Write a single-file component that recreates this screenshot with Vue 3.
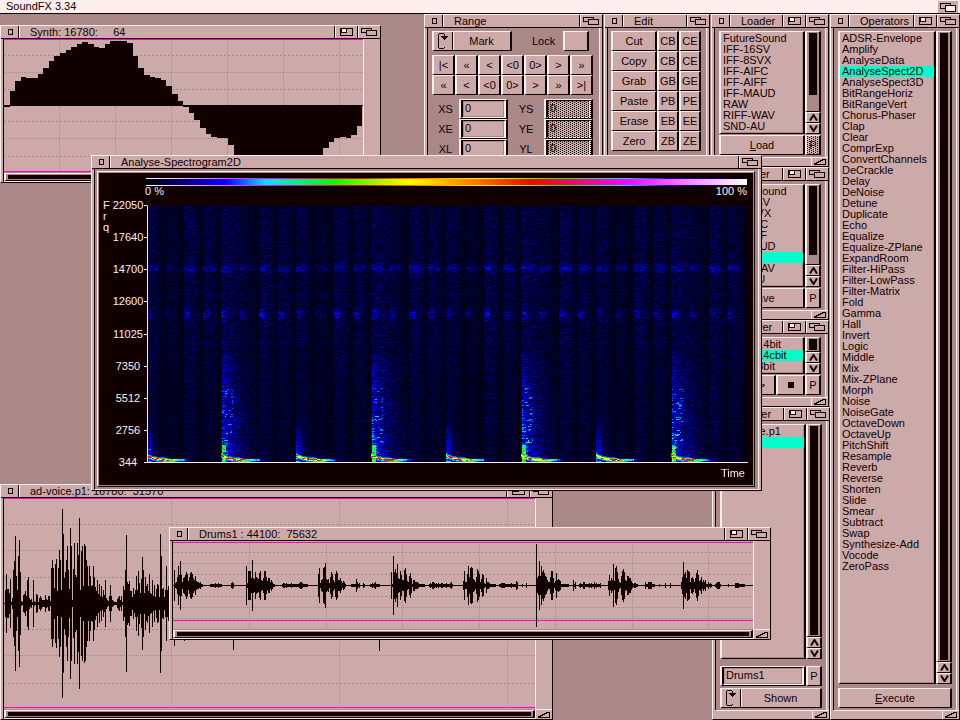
<script setup>
import { reactive } from 'vue'

const formats = ['FutureSound', 'IFF-16SV', 'IFF-8SVX', 'IFF-AIFC', 'IFF-AIFF', 'IFF-MAUD', 'RAW', 'RIFF-WAV', 'SND-AU']
const operators = [
  'ADSR-Envelope', 'Amplify', 'AnalyseData', 'AnalyseSpect2D', 'AnalyseSpect3D', 'BitRangeHoriz', 'BitRangeVert',
  'Chorus-Phaser', 'Clap', 'Clear', 'ComprExp', 'ConvertChannels', 'DeCrackle', 'Delay', 'DeNoise', 'Detune',
  'Duplicate', 'Echo', 'Equalize', 'Equalize-ZPlane', 'ExpandRoom', 'Filter-HiPass', 'Filter-LowPass',
  'Filter-Matrix', 'Fold', 'Gamma', 'Hall', 'Invert', 'Logic', 'Middle', 'Mix', 'Mix-ZPlane', 'Morph', 'Noise',
  'NoiseGate', 'OctaveDown', 'OctaveUp', 'PitchShift', 'Resample', 'Reverb', 'Reverse', 'Shorten', 'Slide',
  'Smear', 'Subtract', 'Swap', 'Synthesize-Add', 'Vocode', 'ZeroPass'
]
const moves = ['|<', '«', '<', '<0', '0>', '>', '»', '«', '<', '<0', '0>', '>', '»', '>|']
const ranges = [
  { id: 'XS' }, { id: 'YS', off: true },
  { id: 'XE' }, { id: 'YE', off: true },
  { id: 'XL' }, { id: 'YL', off: true }
]
const edits = [
  ['Cut', 'CB', 'CE'], ['Copy', 'CB', 'CE'], ['Grab', 'GB', 'GE'],
  ['Paste', 'PB', 'PE'], ['Erase', 'EB', 'EE'], ['Zero', 'ZB', 'ZE']
]
const frequencies = [22050, 17640, 14700, 12600, 11025, 7350, 5512, 2756, 344]

/* Synth: 64 samples, distance of each from the zero line in thirds of a pixel */
const synthHalf = [
  -3, 46, 76, 88, 85, 85, 97, 115, 136, 151, 160, 169, 178, 187, 193, 187, 178, 175, 187, 196, 196, 196, 190,
  151, 115, 94, 88, 85, 79, 61, 37, 16
]
const synth = [...synthHalf, ...[-4, -20, -41, -65, -83, -92, -95, -95, -116], ...Array(15).fill(-170),
  -146, -125, -107, -95, -92, -95, -86, -59]
const synthPath = (() => {
  let d = ''
  synth.forEach((v, i) => {
    const x0 = Math.round(i * 5.6)
    const x1 = Math.round((i + 1) * 5.6)
    const h = Math.round(v / 3)
    const top = h > 0 ? 67 - h : 66
    const height = Math.max(1, Math.abs(h) + (h > 0 ? 0 : 1))
    d += `M${x0} ${top}H${x1}V${top + height}H${x0}Z`
  })
  return d
})()

/* Column amplitudes in thirds of a pixel: [first column, amplitudes...] */
const voice = [
  [1, 38, 86, 42, 42, 30, 72, 3, 14, 100, 127, 200, 80, 40, 142, 188, 93, 5, 3, 25, 28, 35, 20, 68, 79, 14, 10, 12,
    3, 70, 5, 3, 28, 24, 4, 14, 22, 16, 10, 8, 10, 25, 12, 8, 22, 20, 6, 104, 128, 104, 45, 118, 133, 36, 106,
    158, 130, 40, 282, 208, 75, 92, 128, 172, 100, 42, 226, 170, 10, 103, 181, 85, 78, 181, 145, 256, 40, 155,
    170, 50, 176, 170, 128, 110, 50, 110, 80, 50, 55, 110, 78, 48, 35, 70, 28, 58, 22, 50, 18, 38, 24, 70, 15, 10,
    5, 22, 55, 22, 8, 7, 2, 2, 2, 12, 18, 22, 10, 22, 4, 52, 40, 98, 203, 64, 58, 67, 36, 35, 18, 44, 28, 40, 82,
    38, 97, 60, 30, 72, 139, 98, 30, 78, 50, 56, 35, 86, 30, 26, 70, 22, 55, 18, 42, 56, 55, 18, 206, 140, 42, 44,
    18, 40, 110, 38, 50, 30, 60, 40, 80, 50, 126, 60, 30, 20, 50, 40, 60, 30, 20, 40, 111],
  [229, 138], [375, 141]
]
const drums = [
  [1, 46, 5, 10, 25, 56, 30, 73, 30, 10, 20, 25, 30, 38, 32, 12, 24, 36, 40, 32, 20, 14, 26, 12, 10, 8, 6, 8, 4, 4],
  [37, 4, 2, 4, 3, 4, 5, 3, 4, 5, 4, 3, 4], [58, 5, 8, 5],
  [73, 58, 5, 43, 42, 43, 20, 76, 22, 18, 40, 24, 20, 18, 35, 43, 14, 12, 20, 42, 41, 24, 12, 20, 22, 10, 14, 10, 4, 3],
  [109, 3, 6, 6, 4, 5, 2, 2, 3, 2, 5, 4, 3, 2, 4, 2, 2, 4, 6, 10, 8, 6, 3, 2, 2, 4, 3],
  [145, 32, 52, 5, 15, 17, 50, 55, 67, 18, 15, 18, 5, 25, 40, 34, 14, 10, 34, 43, 36, 14, 14, 22, 12, 6, 12, 10, 3],
  [178, 4, 2, 2, 4, 2, 18, 10, 4, 7], [190, 5, 4], [197, 4, 3, 6, 4, 6, 8, 3, 4, 3, 4],
  [218, 40, 2, 88, 40, 48, 35, 64, 20, 18, 42, 30, 14, 16, 46, 50, 32, 12, 8, 28, 36, 22, 4, 14, 16, 8, 10, 8, 6, 3, 4, 2, 4, 2, 4],
  [256, 4, 5, 4, 8, 8, 5, 4, 5, 4, 6, 3, 2, 5, 5, 4, 2, 2, 6, 4, 2, 3, 6, 8, 4],
  [290, 12, 43, 10, 10, 32, 58, 25, 50, 54, 52, 18, 14, 10, 25, 48, 42, 34, 8, 18, 34, 30, 6, 3, 20, 8, 8, 6, 3, 4, 4, 2, 3, 4],
  [326, 3, 4, 7, 7, 6, 7, 4, 3, 3, 2, 2, 2, 5, 4, 2, 2, 4, 11, 10], [349, 3], [353, 7],
  [363, 124, 22, 26, 73, 28, 58, 38, 46, 36, 26, 24, 16, 8, 10, 25, 43, 42, 22, 5, 12, 37, 14, 18, 14, 12, 3, 4, 4, 2, 2, 4, 3, 4],
  [400, 16, 3, 9], [406, 4, 5, 2, 2, 8, 8, 2, 2, 4, 3, 7, 3, 5, 2, 3, 8, 4, 6, 3, 2, 4, 5],
  [435, 12, 31, 12, 22, 14, 64, 12, 50, 58, 40, 18, 10, 5, 26, 42, 48, 38, 14, 12, 26, 28, 20, 20, 12, 6, 4, 7, 7, 4, 3],
  [472, 10, 3, 3, 9, 10, 8, 9, 4, 3, 3], [486, 4], [492, 5], [497, 7],
  [508, 8, 24, 70, 32, 38, 20, 46, 43, 40, 8, 20, 24, 18, 8, 22, 36, 44, 30, 12, 16, 24, 10, 14, 10, 14, 3, 3, 10, 2, 5, 3],
  [542, 4, 5, 10, 9, 8, 4], [555, 4], [562, 6, 7, 7, 6, 3, 4, 3, 4, 3, 3]
]
function columns(runs, centre) {
  let d = ''
  for (const [start, ...values] of runs) {
    values.forEach((v, i) => {
      const h = Math.round(v / 3)
      d += `M${start + i} ${centre - h}h1v${2 * h + 1}h-1z`
    })
  }
  return d
}

const windows = reactive([
  {
    kind: 'wave', title: 'Synth: 16780:     64', zoom: true, x: 0, y: 25, w: 381, h: 158,
    vw: 359, vh: 133, path: synthPath, centre: 66, limits: [0, 132],
    dashed: [16, 50, 82, 117], dotted: [33, 99], verticals: [55, 111, 167, 223, 279, 335]
  },
  {
    kind: 'wave', title: 'ad-voice.p1: 16780:  31570', zoom: true, x: 0, y: 484, w: 553, h: 236,
    vw: 531, vh: 211, path: columns(voice, 105), centre: 105, limits: [0, 209],
    dashed: [26, 79, 131, 185], dotted: [52, 157], verticals: [167, 335, 503]
  },
  { kind: 'range', title: 'Range', x: 424, y: 14, w: 179, h: 150 },
  { kind: 'edit', title: 'Edit', x: 604, y: 14, w: 106, h: 150 },
  { kind: 'files', title: 'Loader', zoom: true, size: true, x: 711, y: 14, w: 118, h: 153, items: formats, picked: -1, knob: 80, action: 'Load', key: true, off: true },
  { kind: 'files', title: 'Saver', zoom: true, size: true, x: 711, y: 167, w: 118, h: 153, items: formats, picked: 6, knob: 90, action: 'Save', key: true },
  { kind: 'player', title: 'Player', zoom: true, size: true, x: 711, y: 320, w: 118, h: 87, items: ['Amiga 14bit', 'Amiga 14cbit', 'Amiga 8bit'], picked: 1, knob: 100 },
  { kind: 'buffers', title: 'Buffer', zoom: true, size: true, x: 712, y: 407, w: 118, h: 313, items: ['ad-voice.p1', 'Drums1', 'Synth'], picked: 1, knob: 100 },
  { kind: 'operators', title: 'Operators', zoom: true, size: true, x: 830, y: 14, w: 130, h: 706, items: operators, picked: 3, knob: 100, action: 'Execute' },
  { kind: 'spectrum', title: 'Analyse-Spectrogram2D', x: 91, y: 155, w: 671, h: 336 },
  {
    kind: 'wave', title: 'Drums1 : 44100:  75632', zoom: true, x: 169, y: 527, w: 602, h: 113,
    vw: 580, vh: 88, path: columns(drums, 44), centre: 44, limits: [1, 79],
    dashed: [11, 33, 55, 77], dotted: [22, 66], verticals: [76, 153, 229, 306, 382, 459, 535]
  }
])
const px = (w) => ({ left: w.x + 'px', top: w.y + 'px', width: w.w + 'px', height: w.h + 'px' })
const hasList = (w) => Boolean(w.items)

/* Level colours: black, blue, cyan, green, yellow, red, magenta, white */
const stops = [[0, 0, 0, 0], [0.13, 0, 0, 255], [0.2, 0, 230, 240], [0.31, 0, 255, 0], [0.44, 255, 255, 0],
  [0.64, 255, 0, 0], [0.8, 255, 0, 255], [1, 255, 255, 255]]
function levelColour(v) {
  const t = Math.min(1, Math.max(0, v))
  let i = 1
  while (t > stops[i][0]) i++
  const a = stops[i - 1]
  const b = stops[i]
  const f = (t - a[0]) / (b[0] - a[0])
  return [1, 2, 3].map((c) => a[c] + (b[c] - a[c]) * f)
}
function paintSpectrum(canvas) {
  if (!canvas) return
  const W = 600
  const H = 256
  const ctx = canvas.getContext('2d')
  const img = ctx.createImageData(W, H)
  let seed = 77
  const rnd = () => {
    seed = (seed * 1664525 + 1013904223) >>> 0
    return seed / 4294967296
  }
  const stepLevel = [0.85, 0.55, 1, 0.85]
  for (let y = 0; y < H; y++) {
    let n = rnd()
    let run = 0
    const up = H - 1 - y
    for (let x = 0; x < W; x++) {
      if (run-- <= 0) {
        n = rnd()
        run = Math.floor(rnd() * 4)
      }
      const beat = Math.min(7, Math.floor((x + 2) / 75))
      const bx = x + 2 - beat * 75
      const snare = beat % 2 === 1
      const step = Math.min(3, Math.floor(bx / 18.75))
      const sx = bx - step * 18.75
      let env = stepLevel[step] * Math.max(0, 1 - Math.pow(Math.abs(sx - 5) / 14, 2))
      if (snare && bx < 37) env = Math.max(env, 1.15 - bx / 45)
      const high = snare && bx < 37 ? 1 : Math.min(1, 0.6 + up / 330)
      let v = 0.006 + (0.08 + env) * (0.013 + 0.038 * n * n) * high
      const b1 = Math.exp(-Math.pow((y - 62) / 3.5, 2)) * (sx < 12 ? 1 : 0.25)
      const b2 = Math.exp(-Math.pow((y - 108) / 5, 2)) * (sx > 0 && sx < 6 ? 1 : 0.1)
      v += (b1 * 0.065 + b2 * 0.07) * (0.1 + env) * (0.15 + n)
      if (y === 88 || y === 136) v += 0.014
      if (y === 215) v += 0.02 * env
      if (snare) {
        const fade = 1 - up / 110
        if (bx > 0 && fade > 0) v += Math.exp(-bx / 11) * Math.sqrt(fade) * (0.045 + 0.12 * n)
        if (bx > 3 && bx < 12 && up > 18 && up < 74 && n > 0.86) v += 0.06
        if (bx > 0 && bx < 5 && up < 17) v += 0.06 + 0.12 * n
      } else if (bx < 5 && up < 42) {
        v += (1 - up / 42) * (0.08 + (y % 3 === 0 ? 0.1 : 0) * n)
      }
      if (up < 70) v += 0.04 * Math.exp(-up / 18) * Math.exp(-bx / 18) * (bx % 5 < 2 ? 1.5 : 0.8)
      const curve = 1 + 5 * Math.exp(-bx / 8)
      const dist = Math.abs(up - curve)
      const tail = bx < 20 ? 1 : Math.max(0, 1 - (bx - 20) / 24)
      if (dist < 2.5) {
        const hot = dist < 1 ? (n > 0.5 ? 0.68 : 0.44) : dist < 1.6 ? 0.28 : 0.16
        v = Math.max(v, hot * tail)
      }
      const rgb = levelColour(v)
      const o = (y * W + x) * 4
      img.data[o] = rgb[0]
      img.data[o + 1] = rgb[1]
      img.data[o + 2] = rgb[2]
      img.data[o + 3] = 255
    }
  }
  ctx.putImageData(img, 0, 0)
}
</script>

<template>
  <main class="screen">
    <header class="menubar">
      <h1>SoundFX 3.34</h1>
      <button class="screen-depth" aria-label="Screen depth">
        <svg width="16" height="9" viewBox="0 0 16 9" shape-rendering="crispEdges">
          <path d="M.5 .5h10v5h-10z" class="line" />
          <path d="M5.5 2.5h10v6h-10z" class="line bright" />
        </svg>
      </button>
    </header>

    <section v-for="w in windows" :key="w.title" class="window" :class="w.kind" :style="px(w)">
      <header class="titlebar">
        <button class="gadget close" aria-label="Close">
          <svg width="5" height="6" viewBox="0 0 5 6" shape-rendering="crispEdges"><path d="M.5 .5h4v5h-4z" class="line" /></svg>
        </button>
        <h2>{{ w.title }}</h2>
        <button v-if="w.zoom" class="gadget" aria-label="Zoom">
          <svg width="13" height="8" viewBox="0 0 13 8" shape-rendering="crispEdges">
            <path d="M.5 .5h12v7h-12z" class="line" />
            <path d="M1.5 .5h5v4h-5z" class="line bright" />
          </svg>
        </button>
        <button class="gadget" aria-label="Depth">
          <svg width="16" height="8" viewBox="0 0 16 8" shape-rendering="crispEdges">
            <path d="M.5 .5h10v4h-10z" class="line" />
            <path d="M5.5 2.5h10v5h-10z" class="line face" />
          </svg>
        </button>
      </header>

      <div v-if="w.kind === 'wave'" class="wave-body">
        <svg class="plot" :viewBox="`0 0 ${w.vw} ${w.vh}`" preserveAspectRatio="none" shape-rendering="crispEdges">
          <path v-for="y in w.dashed" :key="'a' + y" :d="`M0 ${y + 0.5}H${w.vw}`" class="grid dashed" />
          <path v-for="y in w.dotted" :key="'o' + y" :d="`M0 ${y + 0.5}H${w.vw}`" class="grid dotted" />
          <path v-for="x in w.verticals" :key="'v' + x" :d="`M${x + 0.5} 1V${w.vh}`" class="grid dotted" />
          <path v-for="y in w.limits" :key="'l' + y" :d="`M0 ${y}h${w.vw}v1H0z`" class="limit" />
          <path :d="`M0 ${w.centre + 0.5}H${w.vw}`" class="zero" />
          <path :d="w.path" class="signal" />
        </svg>
        <div class="side"></div>
        <div class="hscroll"><div class="hscroll-box"><div class="knob"></div></div></div>
        <button class="size" aria-label="Resize">
          <svg width="12" height="6" viewBox="0 0 12 6" shape-rendering="crispEdges"><path d="M.5 5.5h11v-5h-2L.5 5z" class="line" /></svg>
        </button>
      </div>

      <div v-else-if="w.kind === 'spectrum'" class="spectrum-body">
        <div class="scope">
          <div class="levels"></div>
          <div class="level-text"><span>0 %</span><span>100 %</span></div>
          <div class="chart">
            <div class="unit"><span>F</span><span>r</span><span>q</span></div>
            <ol class="axis">
              <li v-for="f in frequencies" :key="f"><span>{{ f }}</span><i></i></li>
            </ol>
            <canvas :ref="paintSpectrum" width="600" height="256"></canvas>
          </div>
          <p class="time">Time</p>
        </div>
      </div>

      <div v-else class="panel">
        <template v-if="w.kind === 'range'">
          <div class="mark-row">
            <button class="button cycle">
              <svg class="cycle-icon" width="11" height="16" viewBox="0 0 11 16" shape-rendering="crispEdges">
                <path d="M2 0h5v1h-5zM1 1h1v14h-1zM2 15h5v1h-5zM7 14h1v1h-1zM7 1h1v6h-1zM4 3h7v1h-7zM5 4h5v1h-5zM6 5h3v1h-3z" class="solid" />
              </svg>
              <span>Mark</span>
            </button>
            <label for="lock">Lock</label>
            <input id="lock" class="check" type="checkbox" />
          </div>
          <div class="moves"><button v-for="(m, i) in moves" :key="i" class="button">{{ m }}</button></div>
          <div class="fields">
            <template v-for="r in ranges" :key="r.id">
              <label :for="r.id">{{ r.id }}</label>
              <div class="field" :class="{ ghost: r.off }"><input :id="r.id" type="text" value="0" :disabled="r.off" /></div>
            </template>
          </div>
        </template>

        <div v-else-if="w.kind === 'edit'" class="edits">
          <template v-for="row in edits" :key="row[0]">
            <button v-for="b in row" :key="b" class="button">{{ b }}</button>
          </template>
        </div>

        <template v-if="hasList(w)">
          <div class="list-row">
            <ul class="list">
              <li v-for="(item, i) in w.items" :key="item">
                <button :class="{ picked: i === w.picked }" @click="w.picked = i">{{ item }}</button>
              </li>
            </ul>
            <div class="vscroll">
              <div class="track"><div class="knob" :style="{ height: w.knob + '%' }"></div></div>
              <button class="button arrow" aria-label="Up">
                <svg width="9" height="7" viewBox="0 0 9 7"><path d="M1 6.500L4.500 1L8 6.500" class="chevron" /></svg>
              </button>
              <button class="button arrow" aria-label="Down">
                <svg width="9" height="7" viewBox="0 0 9 7"><path d="M1 .5L4.500 6L8 .5" class="chevron" /></svg>
              </button>
            </div>
          </div>
          <div v-if="w.kind === 'player'" class="actions">
            <button class="button grow">&lt;</button>
            <button class="button grow">&gt;</button>
            <button class="button grow" aria-label="Stop"><i class="stop"></i></button>
            <button class="button pref">P</button>
          </div>
          <template v-else-if="w.kind === 'buffers'">
            <div class="actions">
              <div class="field grow"><input type="text" value="Drums1" aria-label="Buffer name" /></div>
              <button class="button pref">P</button>
            </div>
            <button class="button cycle shown">
              <svg class="cycle-icon" width="11" height="16" viewBox="0 0 11 16" shape-rendering="crispEdges">
                <path d="M2 0h5v1h-5zM1 1h1v14h-1zM2 15h5v1h-5zM7 14h1v1h-1zM7 1h1v6h-1zM4 3h7v1h-7zM5 4h5v1h-5zM6 5h3v1h-3z" class="solid" />
              </svg>
              <span>Shown</span>
            </button>
          </template>
          <div v-else class="actions">
            <button class="button grow"><span><u>{{ w.action[0] }}</u>{{ w.action.slice(1) }}</span></button>
            <button v-if="w.key" class="button pref" :class="{ ghost: w.off }" :disabled="w.off">P</button>
          </div>
        </template>
      </div>

      <footer v-if="w.size" class="bottom">
        <button class="size" aria-label="Resize">
          <svg width="12" height="6" viewBox="0 0 12 6" shape-rendering="crispEdges"><path d="M.5 5.5h11v-5h-2L.5 5z" class="line" /></svg>
        </button>
      </footer>
    </section>
  </main>
</template>

<style>
body {
  background: #aa8888;
}
</style>

<style scoped>
.screen {
  --face: #ccaaaa;
  --shade: #aa8888;
  --shine: #ffeeee;
  --ink: #110000;
  --pick: #00ffcc;
  position: relative;
  min-height: 100vh;
  overflow: hidden;
  background: var(--shade);
  color: var(--ink);
  font: 11px/11px "Liberation Sans", Arial, sans-serif;
}
.screen *,
.screen *::after {
  box-sizing: border-box;
}
h1,
h2,
p,
ul,
ol {
  margin: 0;
  padding: 0;
  font: inherit;
  list-style: none;
}
button,
input {
  margin: 0;
  padding: 0;
  border: 0;
  border-radius: 0;
  background: var(--face);
  color: inherit;
  font: inherit;
  appearance: none;
}
svg {
  display: block;
}
.line {
  fill: none;
  stroke: var(--ink);
}
.bright {
  fill: var(--shine);
}
.face {
  fill: var(--face);
}
.solid {
  fill: var(--ink);
}
.chevron {
  fill: none;
  stroke: var(--ink);
  stroke-width: 2;
}
.menubar {
  display: flex;
  justify-content: space-between;
  height: 14px;
  padding: 0 2px 0 6px;
  border-bottom: 1px solid var(--ink);
  background: var(--shine);
  line-height: 13px;
}
.screen-depth {
  display: flex;
  align-items: center;
  justify-content: center;
  width: 20px;
  height: 12px;
  margin-top: 1px;
  background: var(--face);
}

.window {
  position: absolute;
  display: flex;
  flex-direction: column;
  border: 1px solid;
  border-color: var(--shine) var(--ink) var(--ink) var(--shine);
  background: var(--face);
}
.titlebar {
  display: flex;
  flex: none;
  height: 13px;
  border-bottom: 1px solid var(--ink);
}
.titlebar h2 {
  flex: 1;
  padding-left: 10px;
  line-height: 12px;
  white-space: pre;
}
.gadget {
  display: flex;
  align-items: center;
  justify-content: center;
  width: 23px;
  border-left: 1px solid var(--ink);
  box-shadow: inset 1px 0 var(--shine);
}
.gadget.close {
  width: 19px;
  border-left: 0;
  border-right: 1px solid var(--shine);
  box-shadow: inset -1px 0 var(--ink);
}

.wave-body {
  display: grid;
  flex: 1;
  min-height: 0;
  grid-template-columns: minmax(0, 1fr) 17px;
  grid-template-rows: minmax(0, 1fr) 10px;
  margin-left: 2px;
  border-left: 1px solid var(--ink);
}
.plot {
  width: 100%;
  height: 100%;
}
.grid {
  fill: none;
  stroke: var(--shade);
}
.dashed {
  stroke-dasharray: 2 2;
}
.dotted {
  stroke-dasharray: 1 1;
}
.limit {
  fill: #ff00cc;
}
.zero {
  stroke: var(--ink);
}
.signal {
  fill: var(--ink);
}
.side {
  border-left: 1px solid var(--shine);
}
.hscroll {
  border-top: 1px solid var(--shade);
  border-bottom: 1px solid var(--shine);
}
.hscroll-box {
  height: 8px;
  padding: 1px 2px;
  border: solid;
  border-width: 1px 2px;
  border-color: var(--shine) var(--ink) var(--ink) var(--shine);
  background: var(--shade);
}
.hscroll .knob {
  height: 4px;
  background: var(--ink);
}
.size {
  display: flex;
  align-items: center;
  justify-content: center;
  width: 17px;
  border-left: 1px solid var(--shine);
}
.wave-body .size {
  border-top: 1px solid var(--shine);
}

.panel {
  display: flex;
  flex: 1;
  flex-direction: column;
  gap: 1px;
  min-height: 0;
  margin: 0 2px;
  padding: 3px 4px 2px;
  border-left: 1px solid var(--ink);
  border-right: 1px solid var(--shine);
  background: var(--shade);
}
.operators .panel {
  gap: 4px;
}
.buffers .panel {
  gap: 2px;
}
.buffers .list-row {
  margin-bottom: 5px;
}
.range .panel {
  gap: 4px;
}
.edit .panel {
  padding-left: 3px;
}
.bottom {
  display: flex;
  flex: none;
  justify-content: flex-end;
  height: 9px;
  margin-left: 3px;
  border-top: 1px solid var(--shine);
}
.button {
  display: flex;
  align-items: center;
  justify-content: center;
  min-width: 0;
  height: 20px;
  border: solid;
  border-width: 1px 2px;
  border-color: var(--shine) var(--ink) var(--ink) var(--shine);
  background: var(--face);
}
.grow {
  flex: 1;
}
.mark-row {
  display: flex;
  align-items: center;
}
.cycle {
  width: 80px;
}
.cycle span {
  flex: 1;
  align-self: stretch;
  border-left: 1px solid var(--ink);
  box-shadow: inset 1px 0 var(--shine);
  line-height: 18px;
}
.cycle-icon {
  flex: none;
  margin: 0 4px 0 3px;
}
.shown {
  flex: none;
  width: 100%;
}
.mark-row label {
  margin-left: 20px;
}
.check {
  width: 26px;
  height: 20px;
  margin-left: 8px;
  border: solid;
  border-width: 1px 2px;
  border-color: var(--shine) var(--ink) var(--ink) var(--shine);
}
.moves {
  display: grid;
  grid-template-columns: repeat(7, 23px);
}
.fields {
  display: grid;
  grid-template-columns: 27px 49px 36px 49px;
  align-items: center;
}
.fields label {
  text-align: center;
}
.field {
  position: relative;
  height: 20px;
  border: solid;
  border-width: 1px 2px;
  border-color: var(--shine) var(--ink) var(--ink) var(--shine);
}
.field input {
  display: block;
  width: 100%;
  height: 18px;
  padding: 0 2px 2px;
  border: solid;
  border-width: 1px 2px;
  border-color: var(--ink) var(--shine) var(--shine) var(--ink);
  box-shadow: inset 0 0 0 1px var(--shade);
}
.ghost {
  position: relative;
}
.ghost::after {
  content: "";
  position: absolute;
  inset: 0;
  background-image: url("data:image/svg+xml,%3Csvg xmlns='http://www.w3.org/2000/svg' width='4' height='2' shape-rendering='crispEdges'%3E%3Cpath fill='%23110000' d='M0 0h1v1h-1zM2 1h1v1h-1z'/%3E%3C/svg%3E");
}
.edits {
  display: grid;
  grid-template-columns: 46px 22px 22px;
}

.list-row {
  display: flex;
  flex: 1;
  min-height: 0;
}
.list {
  flex: 1;
  min-width: 0;
  padding-top: 1px;
  overflow: hidden;
  border: solid;
  border-width: 1px 2px;
  border-color: var(--shine) var(--ink) var(--ink) var(--shine);
  background: var(--face);
  box-shadow: inset -1px -1px var(--shade);
}
.list button {
  display: block;
  width: 100%;
  height: 11px;
  padding-left: 2px;
  background: none;
  text-align: left;
  white-space: nowrap;
}
.list .picked {
  background: var(--pick);
}
.vscroll {
  display: flex;
  flex-direction: column;
  width: 16px;
}
.track {
  flex: 1;
  min-height: 0;
  padding: 1px 2px;
  border: solid;
  border-width: 1px 2px;
  border-color: var(--shine) var(--ink) var(--ink) var(--shine);
  background: var(--shade);
}
.track .knob {
  background: var(--ink);
}
.arrow {
  flex: none;
  height: 11px;
}
.actions {
  display: flex;
  flex: none;
}
.pref {
  width: 16px;
}
.stop {
  width: 6px;
  height: 6px;
  background: var(--ink);
}

.spectrum-body {
  display: flex;
  flex: 1;
  margin: 0 2px;
  padding: 2px 3px 2px 2px;
  border: solid;
  border-width: 0 1px 1px;
  border-color: var(--shine) var(--shine) var(--shine) var(--ink);
  background: var(--shade);
}
.scope {
  flex: 1;
  padding-top: 5px;
  border: 1px solid;
  border-color: var(--shine) var(--ink) var(--ink) var(--shine);
  outline: 1px solid var(--shade);
  outline-offset: -2px;
  background: var(--ink);
  color: var(--shine);
}
.levels {
  height: 8px;
  margin: 1px 7px 0 48px;
  background:
    linear-gradient(90deg, #000, #00f 13%, #00e6f0 20%, #0f0 31%, #ff0 44%, #f00 64%, #f0f 80%, #fff) 0 1px / 100% 6px no-repeat,
    linear-gradient(270deg, #000, #00f 13%, #00e6f0 20%, #0f0 31%, #ff0 44%, #f00 64%, #f0f 80%, #fff);
}
.level-text {
  display: flex;
  justify-content: space-between;
  margin: 0 7px 3px 47px;
}
.chart {
  display: flex;
}
.unit {
  display: flex;
  flex-direction: column;
  width: 14px;
  padding-left: 5px;
}
.axis {
  display: flex;
  flex-direction: column;
  justify-content: space-between;
  width: 35px;
  height: 268px;
}
.axis li {
  display: flex;
  align-items: center;
}
.axis span {
  flex: 1;
  text-align: center;
}
.axis i {
  width: 3px;
  height: 1px;
  background: var(--shine);
}
canvas {
  flex: 1;
  min-width: 0;
  height: 258px;
  margin: 5px 6px 0 0;
  border: solid var(--shine);
  border-width: 1px 0 1px 1px;
  border-top-color: var(--ink);
}
.time {
  padding-right: 9px;
  text-align: right;
}
</style>
